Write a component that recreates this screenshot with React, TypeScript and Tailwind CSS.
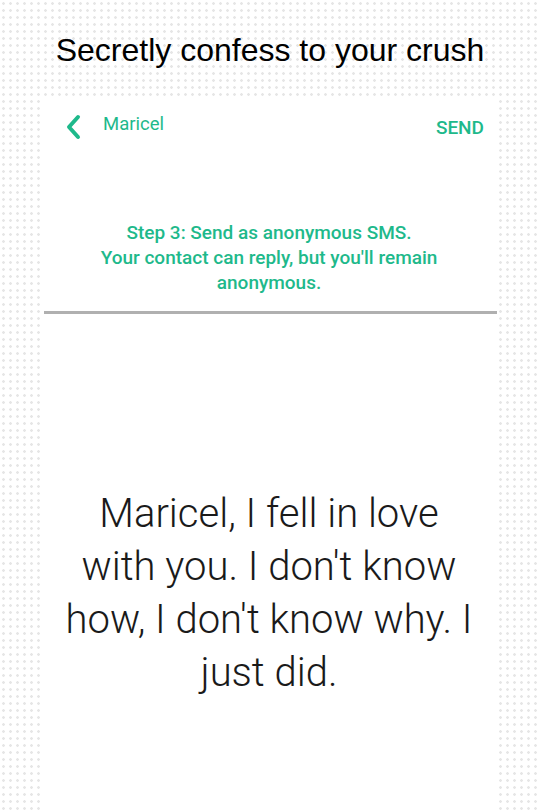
export default function App() {
  return (
    <div className="w-[540px] h-[810px] overflow-hidden bg-white bg-[radial-gradient(circle,#e6e6e6_1px,transparent_1.6px)] bg-[length:7px_7px] flex flex-col">
      <h1 className="pt-[32px] h-[96px] text-center text-[32px] leading-[36px] text-black font-['Liberation_Sans',Arial,sans-serif]">
        Secretly confess to your crush
      </h1>

      <div className="ml-[40px] w-[458px] flex-1 bg-white flex flex-col font-['Roboto','Noto_Sans',sans-serif]">
        {/* toolbar */}
        <div className="flex items-start px-[24px] pt-[17px] h-[96px]">
          <svg width="20" height="28" viewBox="0 0 20 28" className="mt-[0px] shrink-0">
            <path d="M14 4 L5 14 L14 24" fill="none" stroke="#1eb98b" strokeWidth="4" strokeLinecap="round" strokeLinejoin="round" />
          </svg>
          <span className="ml-[19px] text-[18.5px] leading-[22px] text-[#1eb98b]">Maricel</span>
          <span className="ml-auto mr-[-10px] mt-[4px] text-[19px] leading-[22px] font-medium text-[#1eb98b]">SEND</span>
        </div>

        <p className="mt-[28px] text-center text-[19px] leading-[25px] font-medium text-[#1eb98b] px-[30px]">
          Step 3: Send as anonymous SMS.
          <br />
          Your contact can reply, but you'll remain
          <br />
          anonymous.
        </p>

        <div className="mt-[16px] ml-[4px] mr-[1px] h-[3px] bg-[#b0b0b0]" />

        <div className="flex-1 flex items-start justify-center pt-[173px]">
          <p className="text-center text-[40px] leading-[53px] font-light text-[#1a1a1a]">
            Maricel, I fell in love
            <br />
            with you. I don't know
            <br />
            how, I don't know why. I
            <br />
            just did.
          </p>
        </div>
      </div>
    </div>
  );
}
